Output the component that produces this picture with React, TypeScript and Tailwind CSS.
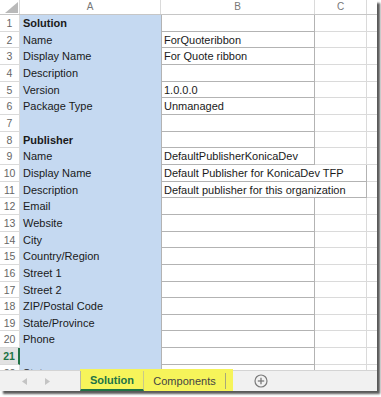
import React from 'react';

type Row = { n: number; a?: string; b?: string; bold?: boolean; overflow?: boolean };

const rows: Row[] = [
  { n: 1, a: 'Solution', bold: true },
  { n: 2, a: 'Name', b: 'ForQuoteribbon' },
  { n: 3, a: 'Display Name', b: 'For Quote ribbon' },
  { n: 4, a: 'Description' },
  { n: 5, a: 'Version', b: '1.0.0.0' },
  { n: 6, a: 'Package Type', b: 'Unmanaged' },
  { n: 7 },
  { n: 8, a: 'Publisher', bold: true },
  { n: 9, a: 'Name', b: 'DefaultPublisherKonicaDev' },
  { n: 10, a: 'Display Name', b: 'Default Publisher for KonicaDev TFP', overflow: true },
  { n: 11, a: 'Description', b: 'Default publisher for this organization', overflow: true },
  { n: 12, a: 'Email' },
  { n: 13, a: 'Website' },
  { n: 14, a: 'City' },
  { n: 15, a: 'Country/Region' },
  { n: 16, a: 'Street 1' },
  { n: 17, a: 'Street 2' },
  { n: 18, a: 'ZIP/Postal Code' },
  { n: 19, a: 'State/Province' },
  { n: 20, a: 'Phone' },
  { n: 21 },
  { n: 22, a: 'Status' },
];

export default function App() {
  return (
    <div className="w-[381px] h-[397px] bg-white overflow-hidden" style={{ fontFamily: '"Liberation Sans", Arial, sans-serif' }}>
      <div className="w-[377px] h-[391px] bg-white flex flex-col shadow-[3px_3px_2px_rgba(0,0,0,0.65)]">
        {/* header */}
        <div className="flex h-[15px] shrink-0 border-b border-[#c6c6c6] text-[10px] text-[#777] leading-[14px]">
          <div className="w-[20px] shrink-0 border-r border-[#dadada] relative">
            <svg className="absolute left-[5px] top-[2px]" width="13" height="11" viewBox="0 0 13 11">
              <polygon points="13,0 13,11 0,11" fill="#b9b9b9" />
            </svg>
          </div>
          <div className="w-[141px] shrink-0 border-r border-[#dadada] text-center">A</div>
          <div className="w-[154px] shrink-0 border-r border-[#dadada] text-center">B</div>
          <div className="w-[52px] shrink-0 border-r border-[#dadada] text-center">C</div>
          <div className="flex-1" />
        </div>
        {/* rows */}
        <div className="flex-1 overflow-hidden flex flex-col">
          {rows.map((r) => {
            const sel = r.n === 21;
            return (
              <div key={r.n} className="flex h-[16.67px] shrink-0 text-[11px] leading-[16px] text-[#1a1a1a]">
                <div
                  className={
                    sel
                      ? 'w-[20px] shrink-0 bg-[#e2e2e2] border-r-2 border-r-[#217346] border-b border-b-[#dadada] text-center text-[10.5px] font-bold text-[#217346]'
                      : 'w-[20px] shrink-0 border-r border-b border-[#dadada] text-center text-[10.5px] text-[#666]'
                  }
                >
                  {r.n}
                </div>
                <div className={`w-[141px] shrink-0 bg-[#c5d9f1] pl-[3px] whitespace-nowrap ${r.bold ? 'font-bold' : ''}`}>
                  {r.a ?? ''}
                </div>
                <div
                  className={
                    r.overflow
                      ? 'w-[154px] shrink-0 border-l border-b border-[#b3b3b3] pl-[2px] whitespace-nowrap overflow-visible relative z-10'
                      : 'w-[154px] shrink-0 border-l border-r border-b border-[#b3b3b3] pl-[2px] whitespace-nowrap overflow-hidden'
                  }
                >
                  {r.b ?? ''}
                </div>
                <div className={`w-[52px] shrink-0 border-r border-b ${r.overflow ? 'border-[#b3b3b3]' : 'border-[#dadada]'}`} />
                <div className="flex-1 border-b border-[#dadada]" />
              </div>
            );
          })}
        </div>
        {/* tab bar */}
        <div className="h-[21px] shrink-0 bg-[#f1f1f1] border-t border-[#d4d4d4] flex items-stretch relative text-[11px]">
          <div className="w-[80px] shrink-0 flex items-center">
            <svg className="ml-[22px]" width="5" height="7" viewBox="0 0 5 7">
              <polygon points="5,0 5,7 0,3.5" fill="#c4c4c4" />
            </svg>
            <svg className="ml-[18px]" width="5" height="7" viewBox="0 0 5 7">
              <polygon points="0,0 0,7 5,3.5" fill="#c4c4c4" />
            </svg>
          </div>
          <div className="flex bg-[#f6f45a] -mt-[2px] pt-[2px] w-[153px] shrink-0">
            <div className="w-[64px] shrink-0 border-l border-[#b9b9a0] border-r border-r-[#c9c98a] flex items-center justify-center font-bold text-[#217346] border-b-2 border-b-[#217346]">
              Solution
            </div>
            <div className="w-[82px] shrink-0 flex items-center justify-center text-[#444] border-r border-[#a8a87a] my-[2px]">
              Components
            </div>
          </div>
          <div className="flex items-center ml-[21px]">
            <svg width="14" height="14" viewBox="0 0 14 14">
              <circle cx="7" cy="7" r="6" fill="none" stroke="#7a7a7a" strokeWidth="1.2" />
              <line x1="7" y1="3.8" x2="7" y2="10.2" stroke="#7a7a7a" strokeWidth="1.3" />
              <line x1="3.8" y1="7" x2="10.2" y2="7" stroke="#7a7a7a" strokeWidth="1.3" />
            </svg>
          </div>
        </div>
      </div>
    </div>
  );
}
